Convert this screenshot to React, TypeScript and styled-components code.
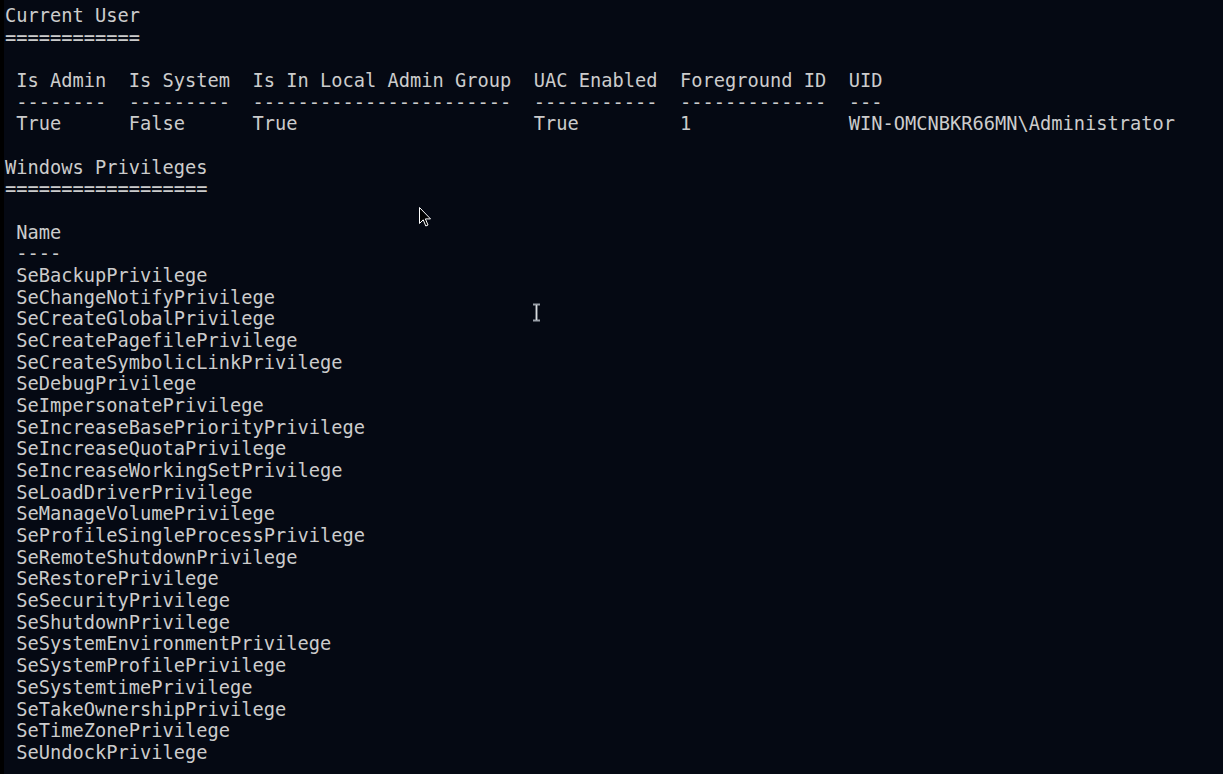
import React from "react";
import styled, { createGlobalStyle } from "styled-components";

const Global = createGlobalStyle`
  html, body { margin: 0; padding: 0; background: #050913; }
  body { width: 1223px; height: 774px; overflow: hidden; }
`;

const Screen = styled.div`
  position: relative;
  width: 1223px;
  height: 774px;
  background: #050913;
  display: flex;
  overflow: hidden;
`;

const Edge = styled.div`
  width: 4px;
  flex: none;
  background: #000000;
`;

const Output = styled.pre`
  margin: 0;
  padding: 5px 0 0 1px;
  font-family: "DejaVu Sans Mono", monospace;
  font-size: 18.7px;
  line-height: 21.68px;
  color: #cccccc;
  white-space: pre;
`;

const Line = styled.div`
  height: 21.68px;
`;

const Pointer = styled.svg`
  position: absolute;
  left: 418px;
  top: 206px;
`;

const IBeam = styled.svg`
  position: absolute;
  left: 532px;
  top: 303px;
`;

const lines = [
  "Current User",
  "============",
  "",
  " Is Admin  Is System  Is In Local Admin Group  UAC Enabled  Foreground ID  UID",
  " --------  ---------  -----------------------  -----------  -------------  ---",
  " True      False      True                     True         1              WIN-OMCNBKR66MN\\Administrator",
  "",
  "Windows Privileges",
  "==================",
  "",
  " Name",
  " ----",
  " SeBackupPrivilege",
  " SeChangeNotifyPrivilege",
  " SeCreateGlobalPrivilege",
  " SeCreatePagefilePrivilege",
  " SeCreateSymbolicLinkPrivilege",
  " SeDebugPrivilege",
  " SeImpersonatePrivilege",
  " SeIncreaseBasePriorityPrivilege",
  " SeIncreaseQuotaPrivilege",
  " SeIncreaseWorkingSetPrivilege",
  " SeLoadDriverPrivilege",
  " SeManageVolumePrivilege",
  " SeProfileSingleProcessPrivilege",
  " SeRemoteShutdownPrivilege",
  " SeRestorePrivilege",
  " SeSecurityPrivilege",
  " SeShutdownPrivilege",
  " SeSystemEnvironmentPrivilege",
  " SeSystemProfilePrivilege",
  " SeSystemtimePrivilege",
  " SeTakeOwnershipPrivilege",
  " SeTimeZonePrivilege",
  " SeUndockPrivilege",
];

export default function App() {
  return (
    <>
      <Global />
      <Screen>
        <Edge />
        <Output>
          {lines.map((l, i) => (
            <Line key={i}>{l}</Line>
          ))}
        </Output>
        <Pointer width="15" height="23" viewBox="0 0 15 23">
          <path
            d="M1.5 1.5 L1.5 17.5 L5.2 13.8 L7.8 20 L10 19 L7.4 12.9 L12.5 12.9 Z"
            fill="#000"
            stroke="#fff"
            strokeWidth="1"
          />
        </Pointer>
        <IBeam width="10" height="20" viewBox="0 0 10 20">
          <path
            d="M1 1.5 H8 M4.5 1.5 V17.5 M1 17.5 H8"
            stroke="#9aa0a8"
            strokeWidth="2.2"
            fill="none"
          />
          <path d="M4.5 2 V17" stroke="#e8e8e8" strokeWidth="0.8" />
        </IBeam>
      </Screen>
    </>
  );
}
